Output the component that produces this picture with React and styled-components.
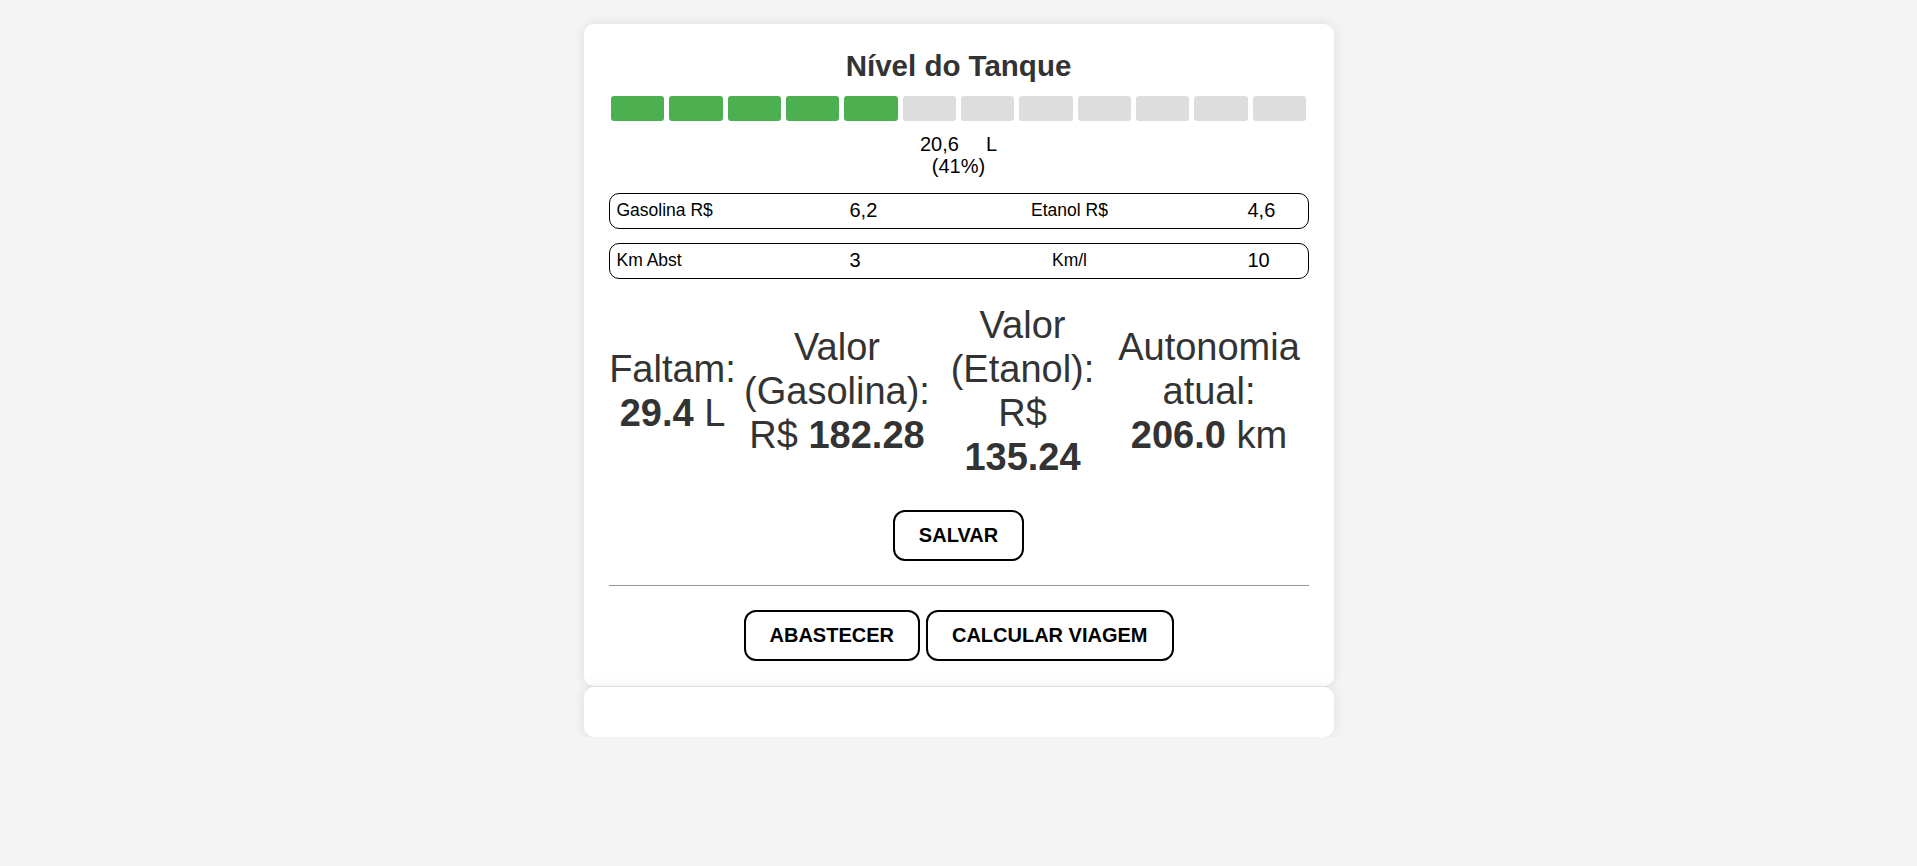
import styled, { createGlobalStyle } from 'styled-components';

const GlobalStyle = createGlobalStyle`
  body {
    margin: 0;
    background: #f4f4f4;
    font-family: 'Liberation Sans', Arial, Helvetica, sans-serif;
  }
`;

/** Barra de nível do tanque
 * @params (number)filled - quantos blocos estão cheios
 * @params (number)total - total de blocos
 */
function TankBar({ filled, total }) {
  return (
    <SBarRow>
      {Array.from({ length: total }, (_, i) => (
        <SBarCell key={i} $on={i < filled} />
      ))}
    </SBarRow>
  );
}

function InputRow({ label1, value1, label2, value2 }) {
  return (
    <SInputRow>
      <SLabel $first>{label1}</SLabel>
      <SValue>{value1}</SValue>
      <SLabel>{label2}</SLabel>
      <SValue>{value2}</SValue>
    </SInputRow>
  );
}

function App() {
  return (
    <>
      <GlobalStyle />
      <SPage>
        <SCard>
          <STitle>Nível do Tanque</STitle>
          <TankBar filled={5} total={12} />
          <SLevel>
            <SLevelLine>
              <span>20,6</span>
              <span>L</span>
            </SLevelLine>
            <span>(41%)</span>
          </SLevel>

          <SRows>
            <InputRow label1="Gasolina R$" value1="6,2" label2="Etanol R$" value2="4,6" />
            <InputRow label1="Km Abst" value1="3" label2="Km/l" value2="10" />
          </SRows>

          <SStats>
            <SStat>
              Faltam: <b>29.4</b> L
            </SStat>
            <SStat>
              Valor (Gasolina): R$ <b>182.28</b>
            </SStat>
            <SStat>
              Valor (Etanol): R$ <b>135.24</b>
            </SStat>
            <SStat $narrow>
              Autonomia atual: <b>206.0</b> km
            </SStat>
          </SStats>

          <SSaveWrap>
            <SButton>SALVAR</SButton>
          </SSaveWrap>

          <SDivider />

          <SActions>
            <SButton>ABASTECER</SButton>
            <SButton>CALCULAR VIAGEM</SButton>
          </SActions>
        </SCard>
        <SEmptyCard />
      </SPage>
    </>
  );
}

const SPage = styled.div`
  width: 750px;
  margin: 24px auto 0;
`;

const SCardBase = styled.div`
  box-sizing: border-box;
  width: 100%;
  background: #fff;
  border-radius: 10px;
  box-shadow: 0 0 12px rgba(0, 0, 0, 0.1);
`;

const SCard = styled(SCardBase)`
  padding: 25px;
`;

const SEmptyCard = styled(SCardBase)`
  height: 50px;
  margin-top: 1.5px;
`;

const STitle = styled.h2`
  margin: 0 0 13px;
  text-align: center;
  font-size: 29.5px;
  font-weight: bold;
  color: #333;
`;

const SBarRow = styled.div`
  display: flex;
  height: 25px;
`;

const SBarCell = styled.div`
  flex: 1;
  margin: 0 2.5px;
  border-radius: 3px;
  background: ${({ $on }) => ($on ? '#4caf50' : '#ddd')};
`;

const SLevel = styled.div`
  display: flex;
  flex-direction: column;
  align-items: center;
  margin-top: 12px;
  font-size: 20px;
  line-height: 22.3px;
  color: #000;
`;

const SLevelLine = styled.div`
  display: flex;
  gap: 27px;
`;

const SRows = styled.div`
  display: flex;
  flex-direction: column;
  gap: 14px;
  margin-top: 15px;
`;

const SInputRow = styled.div`
  display: grid;
  grid-template-columns: 240px 42px 356px 1fr;
  align-items: center;
  box-sizing: border-box;
  height: 36px;
  border: 1px solid #000;
  border-radius: 10px;
  color: #000;
`;

const SLabel = styled.span`
  font-size: 17.5px;
  padding-left: ${({ $first }) => ($first ? '7px' : '0')};
  text-align: ${({ $first }) => ($first ? 'left' : 'center')};
`;

const SValue = styled.span`
  font-size: 20px;
`;

const SStats = styled.div`
  display: grid;
  grid-template-columns: 128px 201px 170px 201px;
  align-items: center;
  margin-top: 24px;
  font-size: 38px;
  line-height: 44px;
  color: #333;
`;

const SStat = styled.div`
  text-align: center;
  padding: ${({ $narrow }) => ($narrow ? '0 5px 0 7px' : '0')};

  b {
    font-weight: bold;
  }
`;

const SSaveWrap = styled.div`
  display: flex;
  justify-content: center;
  margin-top: 31.5px;
`;

const SButton = styled.button`
  box-sizing: border-box;
  height: 50.5px;
  padding: 0 24px;
  border: 2px solid #000;
  border-radius: 12px;
  background: #fff;
  color: #000;
  font-family: inherit;
  font-size: 20px;
  font-weight: bold;
  cursor: pointer;
`;

const SDivider = styled.hr`
  margin: 24.5px 0 0;
  border: 0;
  border-top: 1px solid #999;
`;

const SActions = styled.div`
  display: flex;
  justify-content: center;
  gap: 6px;
  margin-top: 24px;
`;

export default App;
